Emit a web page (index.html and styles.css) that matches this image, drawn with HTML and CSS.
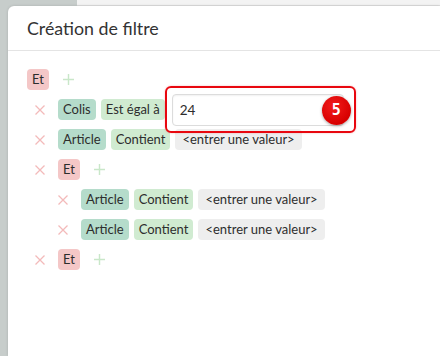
FILE: index.html
```html
<!DOCTYPE html>
<html lang="fr">
<head>
<meta charset="utf-8">
<link rel="stylesheet" href="styles.css">
</head>
<body>
<div class="topbar"><div class="top-left"></div><div class="top-right"></div></div>
<div class="main">
  <div class="side"></div>
  <div class="modal">
    <div class="modal-header">Création de filtre</div>
    <div class="modal-body">
      <div class="row">
        <span class="chip op">Et</span>
        <svg class="plus" viewBox="0 0 10 10"><path d="M5 0V10M0 5H10"/></svg>
      </div>
      <div class="row l1">
        <svg class="del" viewBox="0 0 10 10"><path d="M0.5 0.5L9.5 9.5M9.5 0.5L0.5 9.5"/></svg>
        <span class="chip field">Colis</span>
        <span class="chip cond">Est égal à</span>
        <span class="edit">
          <span class="input">24</span>
          <span class="badge">5</span>
        </span>
      </div>
      <div class="row l1">
        <svg class="del" viewBox="0 0 10 10"><path d="M0.5 0.5L9.5 9.5M9.5 0.5L0.5 9.5"/></svg>
        <span class="chip field">Article</span>
        <span class="chip cond">Contient</span>
        <span class="chip val">&lt;entrer une valeur&gt;</span>
      </div>
      <div class="row l1">
        <svg class="del" viewBox="0 0 10 10"><path d="M0.5 0.5L9.5 9.5M9.5 0.5L0.5 9.5"/></svg>
        <span class="chip op">Et</span>
        <svg class="plus" viewBox="0 0 10 10"><path d="M5 0V10M0 5H10"/></svg>
      </div>
      <div class="row l2">
        <svg class="del" viewBox="0 0 10 10"><path d="M0.5 0.5L9.5 9.5M9.5 0.5L0.5 9.5"/></svg>
        <span class="chip field">Article</span>
        <span class="chip cond">Contient</span>
        <span class="chip val">&lt;entrer une valeur&gt;</span>
      </div>
      <div class="row l2">
        <svg class="del" viewBox="0 0 10 10"><path d="M0.5 0.5L9.5 9.5M9.5 0.5L0.5 9.5"/></svg>
        <span class="chip field">Article</span>
        <span class="chip cond">Contient</span>
        <span class="chip val">&lt;entrer une valeur&gt;</span>
      </div>
      <div class="row l1">
        <svg class="del" viewBox="0 0 10 10"><path d="M0.5 0.5L9.5 9.5M9.5 0.5L0.5 9.5"/></svg>
        <span class="chip op">Et</span>
        <svg class="plus" viewBox="0 0 10 10"><path d="M5 0V10M0 5H10"/></svg>
      </div>
    </div>
  </div>
</div>
</body>
</html>
```
FILE: styles.css
```css
* { box-sizing: border-box; }
html, body { margin: 0; height: 100%; }
body {
  font-family: Lato, "Open Sans", sans-serif;
  color: #2d2d2d;
  background: #c7cdcb;
  display: flex;
  flex-direction: column;
  overflow: hidden;
}
.topbar { display: flex; height: 6px; flex: none; }
.top-left { width: 77px; background: #c7cdcb; }
.top-right { flex: 1; background: #f3f3f3; border-bottom: 1px solid #dedede; }
.main { flex: 1; display: flex; }
.side { width: 8px; background: #c7cdcb; flex: none; }
.modal {
  flex: 1;
  background: #fff;
  border-top-left-radius: 6px;
  box-shadow: 0 0 3px rgba(0,0,0,0.15);
}
.modal-header {
  height: 45px;
  padding: 10px 0 0 19px;
  font-size: 17.8px;
  line-height: 25px;
  color: #333;
  border-bottom: 1px solid #e4e4e4;
}
.modal-body {
  padding: 18px 0 0 19px;
  display: flex;
  flex-direction: column;
  gap: 9px;
}
.row {
  display: flex;
  align-items: center;
  height: 21px;
  gap: 5px;
}
.row.l1 { padding-left: 8px; }
.row.l2 { padding-left: 31px; }
.chip {
  height: 21px;
  line-height: 21px;
  padding: 0 5px;
  border-radius: 4px;
  font-size: 13px;
  white-space: nowrap;
}
.op { background: #f4c7c7; }
.field { background: #b5dccb; }
.cond { background: #d0ebd1; }
.val { background: #eeeeee; padding: 0 7px; }
.del {
  width: 10px; height: 10px;
  margin-right: 8px;
  fill: none;
  stroke: #f3baba;
  stroke-width: 1.3;
}
.plus {
  width: 11px; height: 11px;
  margin-left: 9px;
  fill: none;
  stroke: #c9e7c9;
  stroke-width: 1.3;
}
.edit {
  position: relative;
  margin-left: 2px;
  display: flex;
  align-items: center;
}
.edit::before {
  content: "";
  position: absolute;
  left: -7px; right: -12px; top: -8px; bottom: -7px;
  border: 2px solid #e8070f;
  border-radius: 6px;
  box-shadow: 0 0 2px rgba(232,7,15,0.3);
}
.input {
  width: 172px;
  height: 32px;
  line-height: 30px;
  padding: 0 7px;
  border: 1px solid #dcdcdc;
  border-radius: 4px;
  font-size: 13.5px;
  background: #fff;
  box-shadow: inset 0 1px 2px rgba(0,0,0,0.06);
}
.badge {
  position: absolute;
  right: -7px;
  top: 2px;
  width: 29px; height: 29px;
  border-radius: 50%;
  background: radial-gradient(circle at 40% 35%, #f21c1c, #d70000 70%);
  box-shadow: 0 1px 3px rgba(0,0,0,0.35);
  color: #fff;
  font-family: "DejaVu Sans Mono", monospace;
  font-weight: bold;
  font-size: 15px;
  line-height: 29px;
  text-align: center;
}
```
